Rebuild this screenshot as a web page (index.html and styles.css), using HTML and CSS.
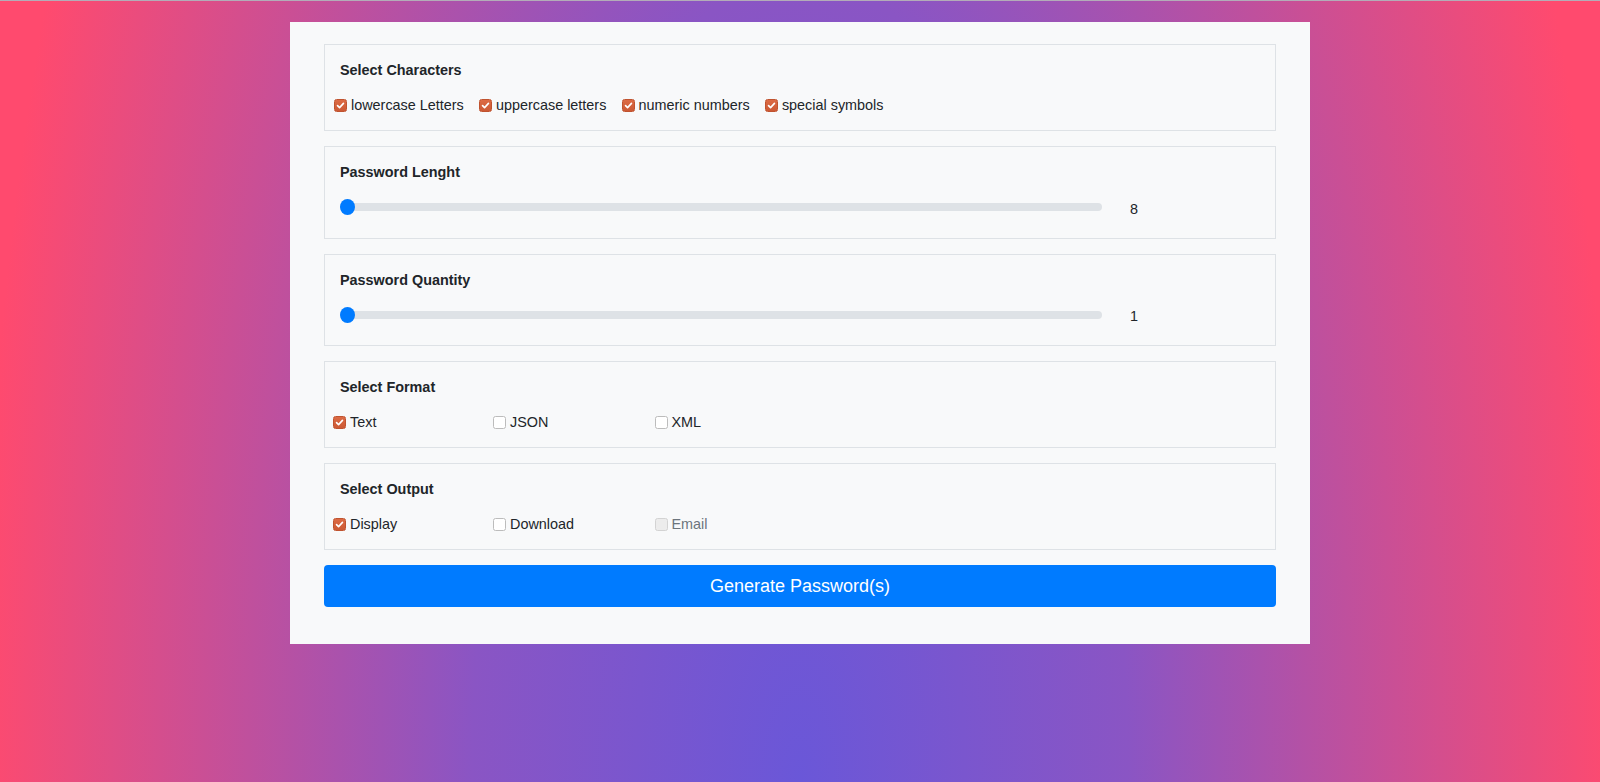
FILE: index.html
```html
<!DOCTYPE html>
<html lang="en">
<head>
<meta charset="utf-8">
<title>Password Generator</title>
<link rel="stylesheet" href="styles.css">
</head>
<body>
<main class="card">
  <section class="group">
    <div class="group-title">Select Characters</div>
    <div class="row row-inline">
      <label class="check"><input type="checkbox" class="check-input" checked><span class="box box-on"><svg viewBox="0 0 13 13" class="tick"><path d="M3 6.6 L5.4 9 L10 4"/></svg></span>lowercase Letters</label>
      <label class="check"><input type="checkbox" class="check-input" checked><span class="box box-on"><svg viewBox="0 0 13 13" class="tick"><path d="M3 6.6 L5.4 9 L10 4"/></svg></span>uppercase letters</label>
      <label class="check"><input type="checkbox" class="check-input" checked><span class="box box-on"><svg viewBox="0 0 13 13" class="tick"><path d="M3 6.6 L5.4 9 L10 4"/></svg></span>numeric numbers</label>
      <label class="check"><input type="checkbox" class="check-input" checked><span class="box box-on"><svg viewBox="0 0 13 13" class="tick"><path d="M3 6.6 L5.4 9 L10 4"/></svg></span>special symbols</label>
    </div>
  </section>

  <section class="group group-slider">
    <div class="group-title">Password Lenght</div>
    <div class="row row-slider">
      <input type="range" class="range" min="8" max="64" value="8">
      <span class="range-value">8</span>
    </div>
  </section>

  <section class="group group-slider">
    <div class="group-title">Password Quantity</div>
    <div class="row row-slider">
      <input type="range" class="range" min="1" max="50" value="1">
      <span class="range-value">1</span>
    </div>
  </section>

  <section class="group">
    <div class="group-title">Select Format</div>
    <div class="row row-cols">
      <label class="check"><input type="checkbox" class="check-input" checked><span class="box box-on"><svg viewBox="0 0 13 13" class="tick"><path d="M3 6.6 L5.4 9 L10 4"/></svg></span>Text</label>
      <label class="check"><input type="checkbox" class="check-input"><span class="box"></span>JSON</label>
      <label class="check"><input type="checkbox" class="check-input"><span class="box"></span>XML</label>
    </div>
  </section>

  <section class="group">
    <div class="group-title">Select Output</div>
    <div class="row row-cols">
      <label class="check"><input type="checkbox" class="check-input" checked><span class="box box-on"><svg viewBox="0 0 13 13" class="tick"><path d="M3 6.6 L5.4 9 L10 4"/></svg></span>Display</label>
      <label class="check"><input type="checkbox" class="check-input"><span class="box"></span>Download</label>
      <label class="check check-disabled"><input type="checkbox" class="check-input" disabled><span class="box box-disabled"></span>Email</label>
    </div>
  </section>

  <button class="btn-generate" type="button">Generate Password(s)</button>
</main>
</body>
</html>
```

FILE: styles.css
```css
html, body {
  margin: 0;
  height: 100%;
}

body {
  font-family: "Liberation Sans", Arial, Helvetica, sans-serif;
  color: #212529;
  border-top: 1px solid #b3acb8;
  box-sizing: border-box;
  background: radial-gradient(ellipse 820px 2000px at 50% 100%, #6a57d8 0%, #8a55c4 40%, #ff4a6e 100%);
  background-color: #ff4a6e;
}

.card {
  width: 1020px;
  box-sizing: border-box;
  margin: 21px auto 0;
  padding: 22px 34px 37px;
  background: #f8f9fa;
  display: flex;
  flex-direction: column;
  gap: 15px;
}

.group {
  border: 1px solid #dee2e6;
  padding: 16px 15px 15px;
  display: flex;
  flex-direction: column;
}

.group-title {
  font-size: 14.4px;
  font-weight: bold;
  line-height: 18px;
  margin-bottom: 16px;
}

.group-slider {
  padding-bottom: 16.5px;
}

.group-slider .group-title {
  margin-bottom: 12px;
}

.row {
  display: flex;
  align-items: center;
  min-height: 20px;
  font-size: 14.4px;
  line-height: 20px;
}

.row-inline {
  margin-left: -6px;
}

.row-inline .check {
  margin-right: 15.2px;
}

.row-cols {
  display: grid;
  grid-template-columns: 160px 161.5px 160px;
  margin-left: -7px;
}

.check {
  display: inline-flex;
  align-items: center;
  white-space: nowrap;
}

.check-input {
  position: absolute;
  opacity: 0;
  width: 0;
  height: 0;
  margin: 0;
}

.box {
  width: 13px;
  height: 13px;
  box-sizing: border-box;
  border: 1px solid #bcbcbc;
  border-radius: 2.5px;
  background: #ffffff;
  margin-right: 4px;
  flex: none;
  display: inline-flex;
}

.box-on {
  background: linear-gradient(#dc6a44, #cc5a35);
  border-color: #c0532f;
}

.box-disabled {
  background: #ececec;
  border-color: #d3d3d3;
}

.tick {
  width: 11px;
  height: 11px;
  fill: none;
  stroke: #ffffff;
  stroke-width: 1.9;
  stroke-linecap: round;
  stroke-linejoin: round;
}

.check-disabled {
  color: #6c757d;
}

.row-slider {
  min-height: 28px;
}

.range {
  -webkit-appearance: none;
  appearance: none;
  width: 762px;
  height: 8px;
  margin: 0;
  border-radius: 4px;
  background: #dee2e6;
  outline: none;
}

.range::-webkit-slider-thumb {
  -webkit-appearance: none;
  appearance: none;
  width: 15px;
  height: 16px;
  border-radius: 50%;
  background: #007bff;
  border: none;
}

.range-value {
  margin-left: 28px;
  margin-top: 3px;
  font-size: 14.4px;
}

.btn-generate {
  height: 42px;
  border: none;
  border-radius: 4px;
  background: #007bff;
  color: #ffffff;
  font-family: "Liberation Sans", Arial, Helvetica, sans-serif;
  font-size: 18px;
  cursor: pointer;
}
```
